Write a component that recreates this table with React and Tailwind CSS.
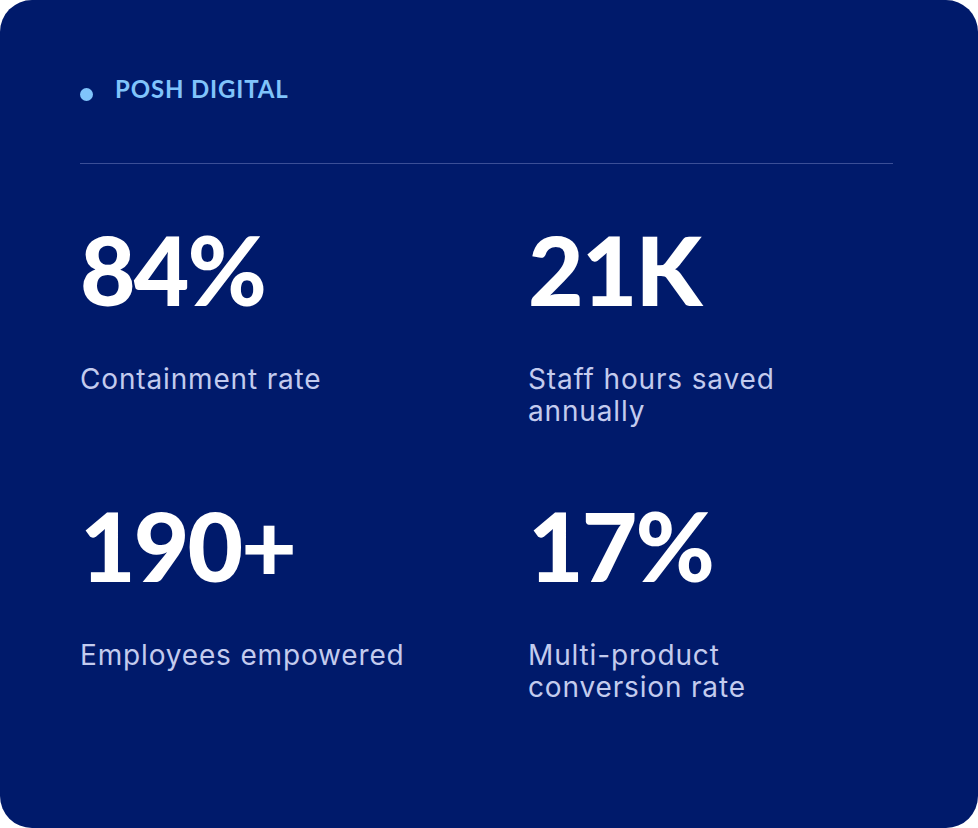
export default function App() {
  const stats = [
    { value: "84%", label: ["Containment rate"] },
    { value: "21K", label: ["Staff hours saved", "annually"] },
    { value: "190+", label: ["Employees empowered"] },
    { value: "17%", label: ["Multi-product", "conversion rate"] },
  ];
  return (
    <div className="w-[978px] h-[828px] bg-white" style={{ fontFamily: "Inter, Lato, sans-serif" }}>
      <div className="h-full rounded-[32px] bg-[#001a6b] pl-20 pr-[85px] pt-[73px]">
        <div className="flex items-start">
          <span className="mt-[15px] h-[13px] w-[13px] rounded-full bg-[#80c4fb]" />
          <span
            className="ml-[22px] text-[24px] leading-[32px] font-bold tracking-[0.035em] text-[#80c4fb]"
            style={{ fontFamily: "Lato, sans-serif" }}
          >
            POSH DIGITAL
          </span>
        </div>
        <div className="mt-[58px] h-px bg-[#3b4f97]" />
        <div className="mt-[57px] grid grid-cols-2 gap-x-[83px] gap-y-[70px]">
          {stats.map((s) => (
            <div key={s.value} className="flex flex-col">
              <div
                className="text-[96px] leading-none font-black tracking-[-0.02em] text-white"
                style={{ fontFamily: "Lato, sans-serif" }}
              >
                {s.value}
              </div>
              <div className="mt-[46px] text-[28px] leading-[32px] font-normal tracking-[0.03em] text-[#c3cbee]">
                {s.label.map((l) => (
                  <div key={l} className="whitespace-nowrap">{l}</div>
                ))}
              </div>
            </div>
          ))}
        </div>
      </div>
    </div>
  );
}
